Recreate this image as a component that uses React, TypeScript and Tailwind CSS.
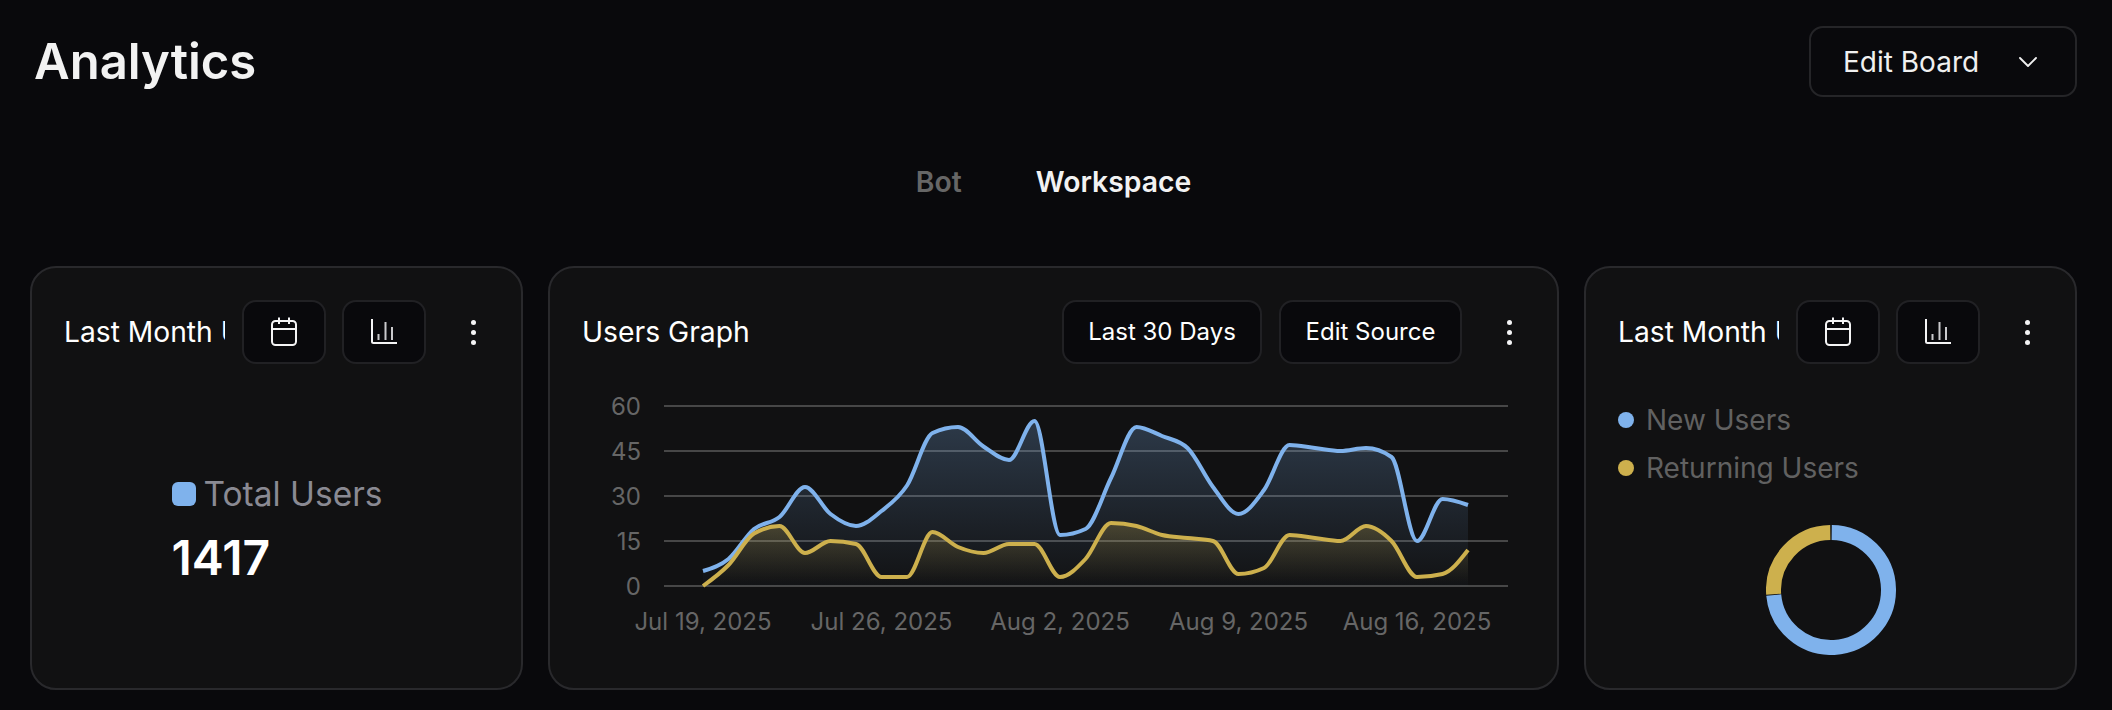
import { ChevronDown } from "lucide-react";

const newUsers = [5, 9, 19, 23, 33, 24, 20, 25, 33.5, 51, 53, 46.5, 42, 55, 17, 19, 36, 53, 50, 46, 33, 24, 32, 47, 46, 45, 46, 43, 15, 29, 27];
const returning = [0, 7, 17.5, 20, 11, 15, 14, 3, 3, 18, 13, 11, 14, 14, 3, 9, 21, 20, 17, 16, 15, 4, 6, 17, 16, 15, 20, 15, 3, 4, 12];

// chart area inside the svg: x=0 is where the grid lines start
const startX = 39;
const stepX = 25.5;
const baseY = 182;
const toY = (v: number) => baseY - v * 3;

// monotone cubic, same curve the chart lib draws
function linePath(values: number[]) {
  const pts = values.map((v, i) => [startX + i * stepX, toY(v)]);
  const n = pts.length;
  const slopes: number[] = [];
  for (let i = 0; i < n - 1; i++) slopes.push((pts[i + 1][1] - pts[i][1]) / stepX);
  const t: number[] = new Array(n).fill(0);
  for (let i = 1; i < n - 1; i++) {
    const a = slopes[i - 1];
    const b = slopes[i];
    if (a * b > 0) t[i] = 2 * Math.sign(a) * Math.min(Math.abs(a), Math.abs(b), Math.abs(a + b) / 4);
  }
  t[0] = (3 * slopes[0] - t[1]) / 2;
  t[n - 1] = (3 * slopes[n - 2] - t[n - 2]) / 2;
  let d = `M${pts[0][0]},${pts[0][1]}`;
  for (let i = 0; i < n - 1; i++) {
    const h = stepX / 3;
    d += `C${pts[i][0] + h},${pts[i][1] + t[i] * h} ${pts[i + 1][0] - h},${pts[i + 1][1] - t[i + 1] * h} ${pts[i + 1][0]},${pts[i + 1][1]}`;
  }
  return d;
}

function areaPath(values: number[]) {
  const endX = startX + (values.length - 1) * stepX;
  return `${linePath(values)}L${endX},${baseY}L${startX},${baseY}Z`;
}

function CalendarIcon() {
  return (
    <svg width="28" height="32" viewBox="0 0 28 32" fill="none" stroke="#f4f4f5" strokeWidth="2">
      <rect x="2" y="5" width="24" height="24" rx="3.5" />
      <path d="M2 13H26M9 1.5V8M19 1.5V8" />
    </svg>
  );
}

function BarsIcon() {
  return (
    <svg width="28" height="28" viewBox="0 0 28 28" fill="none" stroke="#f4f4f5" strokeWidth="2">
      <path d="M2 1V23.5Q2 25 3.5 25H27" />
      <path d="M8.5 16V22M15.5 4V22M22 9V22" stroke="#c9c9cc" />
    </svg>
  );
}

function Dots() {
  return (
    <button className="w-8 h-8 flex flex-col items-center justify-center gap-[5px] shrink-0 ml-[31px]">
      <span className="w-[5px] h-[5px] rounded-full bg-[#f4f4f5]" />
      <span className="w-[5px] h-[5px] rounded-full bg-[#f4f4f5]" />
      <span className="w-[5px] h-[5px] rounded-full bg-[#f4f4f5]" />
    </button>
  );
}

function CardHeader() {
  return (
    <div className="flex items-center h-[64px]">
      <h3 className="flex-1 min-w-0 overflow-hidden whitespace-nowrap text-[28.2px] text-white mr-[17px]">Last Month Users</h3>
      <button className="w-[84px] h-[64px] shrink-0 flex items-center justify-center rounded-[14px] border-2 border-[#212124] bg-[#09090c]">
        <CalendarIcon />
      </button>
      <button className="w-[84px] h-[64px] shrink-0 ml-[16px] flex items-center justify-center rounded-[14px] border-2 border-[#212124] bg-[#09090c]">
        <BarsIcon />
      </button>
      <Dots />
    </div>
  );
}

function UsersChart() {
  const grid = [2, 47, 92, 137, 182];
  const labels = ["60", "45", "30", "15", "0"];
  const dates: [number, string][] = [
    [39, "Jul 19, 2025"],
    [217.5, "Jul 26, 2025"],
    [396, "Aug 2, 2025"],
    [574.5, "Aug 9, 2025"],
    [753, "Aug 16, 2025"],
  ];
  return (
    <svg width="943" height="252" viewBox="-82 -12 943 252" className="block mt-[28px]" fontFamily="Inter, sans-serif">
      <defs>
        <linearGradient id="blueFill" x1="0" y1="0" x2="0" y2="1">
          <stop offset="5%" stopColor="#7fb2ec" stopOpacity="0.24" />
          <stop offset="95%" stopColor="#7fb2ec" stopOpacity="0.02" />
        </linearGradient>
        <linearGradient id="yellowFill" x1="0" y1="0" x2="0" y2="1">
          <stop offset="5%" stopColor="#cdb04d" stopOpacity="0.24" />
          <stop offset="95%" stopColor="#cdb04d" stopOpacity="0" />
        </linearGradient>
      </defs>
      {grid.map((y, i) => (
        <g key={y}>
          <line x1="0" x2="844" y1={y} y2={y} stroke="#5a5a5a" strokeWidth="1.5" />
          <text x="-23" y={y + 9} textAnchor="end" fontSize="24" fill="#666666">{labels[i]}</text>
        </g>
      ))}
      <path d={areaPath(newUsers)} fill="url(#blueFill)" />
      <path d={areaPath(returning)} fill="url(#yellowFill)" />
      <path d={linePath(newUsers)} fill="none" stroke="#7fb2ec" strokeWidth="4" />
      <path d={linePath(returning)} fill="none" stroke="#cdb04d" strokeWidth="4" />
      {dates.map(([x, label]) => (
        <text key={label} x={x} y="226" textAnchor="middle" fontSize="24" fill="#666666">{label}</text>
      ))}
    </svg>
  );
}

function arc(from: number, to: number) {
  const r = 57.5;
  const pt = (a: number) => {
    const rad = ((a - 90) * Math.PI) / 180;
    return `${65 + r * Math.cos(rad)} ${65 + r * Math.sin(rad)}`;
  };
  return `M${pt(from)}A${r} ${r} 0 ${to - from > 180 ? 1 : 0} 1 ${pt(to)}`;
}

function Donut() {
  return (
    <svg width="130" height="130" viewBox="0 0 130 130" fill="none" strokeWidth="15">
      <path d={arc(0.7, 265)} stroke="#7fb2ec" />
      <path d={arc(265.8, 359.3)} stroke="#cdb04d" />
    </svg>
  );
}

export default function App() {
  return (
    <div className="min-h-[710px] bg-[#09090c] pl-[30px] pr-[35px] pt-[26px] font-['Inter',sans-serif] overflow-hidden">
      <header className="flex items-center justify-between">
        <h1 className="pl-[4px] text-[49px] leading-none font-semibold text-[#f2f2f2]">Analytics</h1>
        <button className="w-[268px] h-[71px] pl-[32px] pr-[31px] flex items-center justify-between rounded-[14px] border-2 border-[#252528] bg-[#09090c] text-[28px] text-[#f0f0f0]">
          Edit Board
          <ChevronDown size={32} strokeWidth={1.4} />
        </button>
      </header>

      <nav className="flex justify-center gap-[74px] mt-[67px] mb-[66px] h-9 items-center text-[28.3px] font-semibold">
        <button className="text-[#666666]">Bot</button>
        <button className="text-[#f2f2f2]">Workspace</button>
      </nav>

      <main className="grid grid-cols-[493px_1fr_493px] gap-[25px] h-[424px]">
        <section className="flex flex-col rounded-[26px] border-2 border-[#29292c] bg-[#111112] px-[32px] pt-[32px]">
          <CardHeader />
          <div className="flex-1 flex items-center justify-center pt-[4px] pl-[1px]">
            <div>
              <div className="flex items-center gap-[8px] text-[33.5px] leading-10 text-[#8a8a93]">
                <span className="w-6 h-6 rounded-[6px] bg-[#7fb2ec]" />
                Total Users
              </div>
              <div className="text-[48px] leading-none font-semibold text-white mt-[20px]">1417</div>
            </div>
          </div>
        </section>

        <section className="rounded-[26px] border-2 border-[#29292c] bg-[#111112] px-[32px] pt-[32px]">
          <div className="flex items-center h-[64px]">
            <h3 className="flex-1 text-[28.3px] text-white">Users Graph</h3>
            <button className="w-[200px] h-[64px] rounded-[14px] border-2 border-[#212124] bg-[#09090c] text-[24px] text-white">Last 30 Days</button>
            <button className="w-[183px] h-[64px] ml-[17px] rounded-[14px] border-2 border-[#212124] bg-[#09090c] text-[24px] text-white">Edit Source</button>
            <Dots />
          </div>
          <UsersChart />
        </section>

        <section className="flex flex-col rounded-[26px] border-2 border-[#29292c] bg-[#111112] px-[32px] pt-[32px]">
          <CardHeader />
          <div className="mt-[38px] flex flex-col gap-[12px] text-[28px] leading-9 text-[#616161]">
            <div className="flex items-center gap-[12px]">
              <span className="w-4 h-4 rounded-full bg-[#7fb2ec]" />
              New Users
            </div>
            <div className="flex items-center gap-[12px]">
              <span className="w-4 h-4 rounded-full bg-[#cdb04d]" />
              Returning Users
            </div>
          </div>
          <div className="flex justify-center mt-[39px]">
            <Donut />
          </div>
        </section>
      </main>
    </div>
  );
}
